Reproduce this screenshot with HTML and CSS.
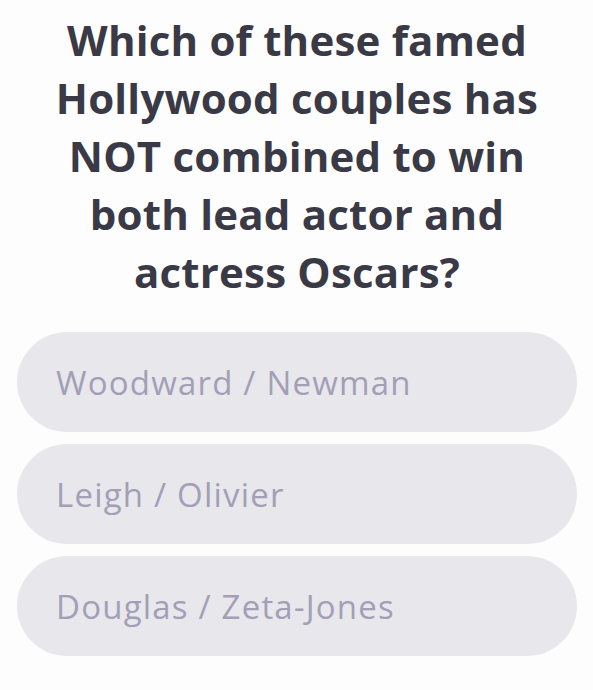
FILE: index.html
```html
<!DOCTYPE html>
<html lang="en">
<head>
    <meta charset="UTF-8">
    <meta name="viewport" content="width=device-width, initial-scale=1.0">
    <title>Oscars Trivia</title>
    <link rel="stylesheet" href="styles.css">
</head>
<body>
    <div class="quiz">
        <h1 class="question">Which of these famed<br>Hollywood couples has<br>NOT combined to win<br>both lead actor and<br>actress Oscars?</h1>
        <div class="answers">
            <button class="answer">Woodward / Newman</button>
            <button class="answer">Leigh / Olivier</button>
            <button class="answer">Douglas / Zeta-Jones</button>
        </div>
    </div>
</body>
</html>
```

FILE: styles.css
```css
body {
    margin: 0;
    background-color: #fdfdfd;
    font-family: "Open Sans", sans-serif;
}

.quiz {
    padding: 11px 16px 0 17px;
}

.question {
    margin: 0 0 31px;
    font-size: 42px;
    line-height: 58px;
    font-weight: 700;
    letter-spacing: 0.2px;
    text-align: center;
    color: #3a3946;
}

.answers {
    display: flex;
    flex-direction: column;
    gap: 12px;
}

.answer {
    height: 100px;
    padding: 0 0 0 39px;
    border: none;
    border-radius: 50px;
    background-color: #e8e7ec;
    color: #a29fb7;
    font-family: inherit;
    font-size: 33px;
    letter-spacing: 1.2px;
    text-align: left;
}
```
